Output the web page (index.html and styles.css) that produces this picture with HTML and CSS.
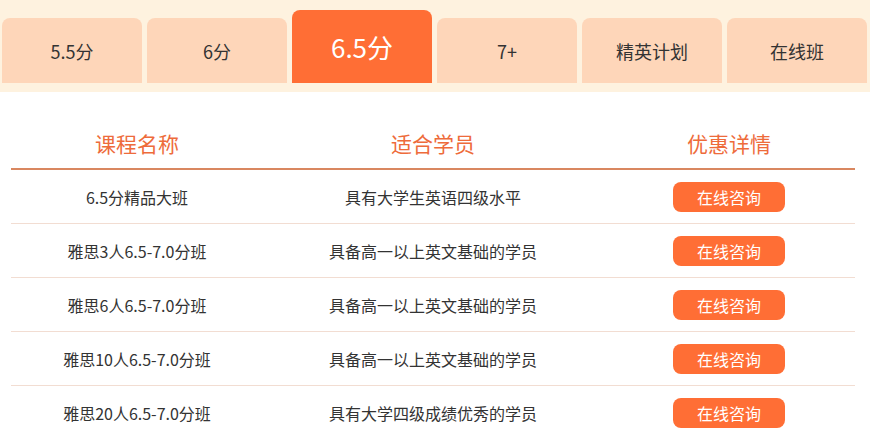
FILE: index.html
```html
<!DOCTYPE html>
<html lang="zh">
<head>
<meta charset="utf-8">
<link rel="stylesheet" href="styles.css">
</head>
<body>
<div class="tabs-band">
  <div class="tabs">
    <div class="tab">5.5分</div>
    <div class="tab">6分</div>
    <div class="tab active">6.5分</div>
    <div class="tab">7+</div>
    <div class="tab">精英计划</div>
    <div class="tab">在线班</div>
  </div>
</div>
<div class="table">
  <div class="row head">
    <div class="c1">课程名称</div>
    <div class="c2">适合学员</div>
    <div class="c3">优惠详情</div>
  </div>
  <div class="row">
    <div class="c1">6.5分精品大班</div>
    <div class="c2">具有大学生英语四级水平</div>
    <div class="c3"><span class="btn">在线咨询</span></div>
  </div>
  <div class="row">
    <div class="c1">雅思3人6.5-7.0分班</div>
    <div class="c2">具备高一以上英文基础的学员</div>
    <div class="c3"><span class="btn">在线咨询</span></div>
  </div>
  <div class="row">
    <div class="c1">雅思6人6.5-7.0分班</div>
    <div class="c2">具备高一以上英文基础的学员</div>
    <div class="c3"><span class="btn">在线咨询</span></div>
  </div>
  <div class="row">
    <div class="c1">雅思10人6.5-7.0分班</div>
    <div class="c2">具备高一以上英文基础的学员</div>
    <div class="c3"><span class="btn">在线咨询</span></div>
  </div>
  <div class="row">
    <div class="c1">雅思20人6.5-7.0分班</div>
    <div class="c2">具有大学四级成绩优秀的学员</div>
    <div class="c3"><span class="btn">在线咨询</span></div>
  </div>
</div>
</body>
</html>
```
FILE: styles.css
```css
html, body {
  margin: 0;
  padding: 0;
  background: #ffffff;
  font-family: "Noto Sans CJK SC", "Noto Sans", sans-serif;
  color: #333333;
}
.tabs-band {
  background: #fef2df;
  height: 92px;
  box-sizing: border-box;
  padding: 0 0 9px 2px;
  display: flex;
  align-items: flex-end;
}
.tabs {
  display: flex;
  align-items: flex-end;
  gap: 5px;
}
.tab {
  width: 140px;
  height: 65px;
  background: #fed6b9;
  border-radius: 8px 8px 0 0;
  display: flex;
  align-items: center;
  justify-content: center;
  font-size: 18px;
  color: #333333;
}
.tab.active {
  height: 73px;
  background: #ff6e35;
  color: #ffffff;
  font-size: 26px;
}
.table {
  margin: 0 15px 0 11px;
}
.row {
  display: grid;
  grid-template-columns: 252px 340px 252px;
  height: 54px;
  box-sizing: border-box;
  align-items: center;
  border-bottom: 1px solid #f2ddd2;
  font-size: 16px;
  line-height: 20px;
}
.row:last-child {
  border-bottom: none;
}
.row > div {
  text-align: center;
}
.row.head {
  height: 78px;
  padding-top: 37px;
  padding-bottom: 11px;
  border-bottom: 2px solid #d98760;
  font-size: 21px;
  line-height: 28px;
  color: #ee6b3b;
}
.btn {
  display: inline-flex;
  align-items: center;
  justify-content: center;
  width: 112px;
  height: 30px;
  border-radius: 8px;
  background: #ff6e35;
  color: #ffffff;
  font-size: 16px;
}
```
